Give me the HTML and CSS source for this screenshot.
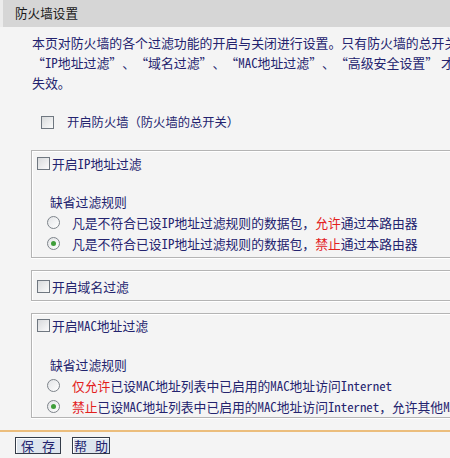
FILE: index.html
```html
<!DOCTYPE html>
<html lang="zh-CN">
<head>
<meta charset="utf-8">
<title>防火墙设置</title>
<link rel="stylesheet" href="styles.css">
</head>
<body>
<div class="page">
  <div class="title">防火墙设置</div>
  <div class="intro">
    <div class="line">本页对防火墙的各个过滤功能的开启与关闭进行设置。只有防火墙的总开关是开启的时候，后续的</div>
    <div class="line"><span class="ql">“</span><span class="en">IP</span>地址过滤<span class="qr">”</span>、<span class="ql">“</span>域名过滤<span class="qr">”</span>、<span class="ql">“</span><span class="en">MAC</span>地址过滤<span class="qr">”</span>、<span class="ql">“</span>高级安全设置<span class="qr">”</span> 才能生效，反之，则</div>
    <div class="line">失效。</div>
  </div>
  <div class="master"><span class="cb"></span><span class="master-text">开启防火墙（防火墙的总开关）</span></div>

  <div class="box box-ip">
    <div class="cbrow"><span class="cb"></span>开启<span class="en">IP</span>地址过滤</div>
    <div class="rule">缺省过滤规则</div>
    <div class="radiorow"><span class="rd"></span>凡是不符合已设<span class="en">IP</span>地址过滤规则的数据包，<span class="red">允许</span>通过本路由器</div>
    <div class="radiorow"><span class="rd on"></span>凡是不符合已设<span class="en">IP</span>地址过滤规则的数据包，<span class="red">禁止</span>通过本路由器</div>
  </div>

  <div class="box box-domain">
    <div class="cbrow"><span class="cb"></span>开启域名过滤</div>
  </div>

  <div class="box box-mac">
    <div class="cbrow"><span class="cb"></span>开启<span class="en">MAC</span>地址过滤</div>
    <div class="rule">缺省过滤规则</div>
    <div class="radiorow"><span class="rd"></span><span class="red">仅允许</span>已设<span class="en">MAC</span>地址列表中已启用的<span class="en">MAC</span>地址访问<span class="en">Internet</span></div>
    <div class="radiorow"><span class="rd on"></span><span class="red">禁止</span>已设<span class="en">MAC</span>地址列表中已启用的<span class="en">MAC</span>地址访问<span class="en">Internet</span>，允许其他<span class="en">MAC</span>地址访问<span class="en">Internet</span></div>
  </div>

  <div class="divider"></div>
  <div class="buttons">
    <span class="btn btn-save">保 存</span>
    <span class="btn btn-help">帮 助</span>
  </div>
</div>
</body>
</html>
```
FILE: styles.css
```css
html, body {
  margin: 0;
  padding: 0;
  overflow: hidden;
  background: #f4f4f4;
}
body {
  font-family: "Noto Sans CJK SC", "Liberation Sans", sans-serif;
  font-size: 12.8px;
  color: #23236e;
  text-spacing-trim: space-all;
}
.page {
  width: 620px;
}
.en {
  font-feature-settings: "hwid";
}
.title {
  height: 27px;
  line-height: 25px;
  background: #d6d6d6;
  border-left: 3px solid #ececec;
  padding-left: 12px;
  color: #1a1a1a;
  font-size: 12.6px;
  box-sizing: border-box;
}
.ql,
.qr {
  display: inline-block;
  width: 1em;
}
.ql {
  text-align: center;
}
.qr {
  text-align: left;
}
.intro {
  margin: 6px 0 0 32px;
  line-height: 20px;
  font-size: 12.9px;
  white-space: nowrap;
}
.master {
  margin-top: 19px;
  height: 20px;
  padding-left: 41px;
  display: flex;
  align-items: center;
  white-space: nowrap;
  font-size: 12.3px;
}
.master-text {
  margin-left: 13px;
}
.cb {
  display: inline-block;
  width: 11px;
  height: 11px;
  border: 1px solid #6f7780;
  background: linear-gradient(135deg, #d8dadc, #fbfbfb);
  flex: none;
}
.box {
  margin-left: 31px;
  border: 1px solid #b4b4b4;
  box-shadow: inset 1px 1px 0 #ffffff, 0 1px 0 #ffffff;
  white-space: nowrap;
}
.box-ip {
  margin-top: 18px;
  padding: 2px 0 3px 5px;
}
.box-domain {
  margin-top: 12px;
  padding: 5px 0 4px 5px;
}
.box-mac {
  margin-top: 12px;
  padding: 1px 0 0 5px;
}
.cbrow {
  height: 20px;
  display: flex;
  align-items: center;
}
.cbrow .cb {
  margin-right: 2px;
}
.rule {
  margin-top: 19px;
  height: 20px;
  line-height: 20px;
  padding-left: 13px;
}
.box-mac .rule {
  margin-top: 20px;
}
.radiorow {
  height: 21px;
  display: flex;
  align-items: center;
  padding-left: 10px;
}
.rd {
  position: relative;
  display: inline-block;
  width: 11px;
  height: 11px;
  border: 1px solid #7d838a;
  border-radius: 50%;
  background: linear-gradient(135deg, #e2e4e6, #ffffff);
  margin-right: 12px;
  flex: none;
}
.rd.on::after {
  content: "";
  position: absolute;
  left: 3px;
  top: 3px;
  width: 5px;
  height: 5px;
  border-radius: 50%;
  background: #3f9e3a;
}
.red {
  color: #e3201c;
}
.divider {
  margin-top: 12px;
  height: 2px;
  background: #ebbd7c;
  width: 450px;
}
.buttons {
  margin-top: 5px;
  padding-left: 15px;
  display: flex;
  gap: 11px;
}
.btn {
  display: inline-block;
  height: 15px;
  line-height: 15px;
  border: 1px solid #333b48;
  background: #dde5ee;
  box-shadow: inset 1px 1px 0 #ffffff;
  text-align: center;
  color: #23236e;
  font-size: 13px;
  word-spacing: 5px;
}
.btn-save {
  width: 44px;
}
.btn-help {
  width: 36px;
}
```
